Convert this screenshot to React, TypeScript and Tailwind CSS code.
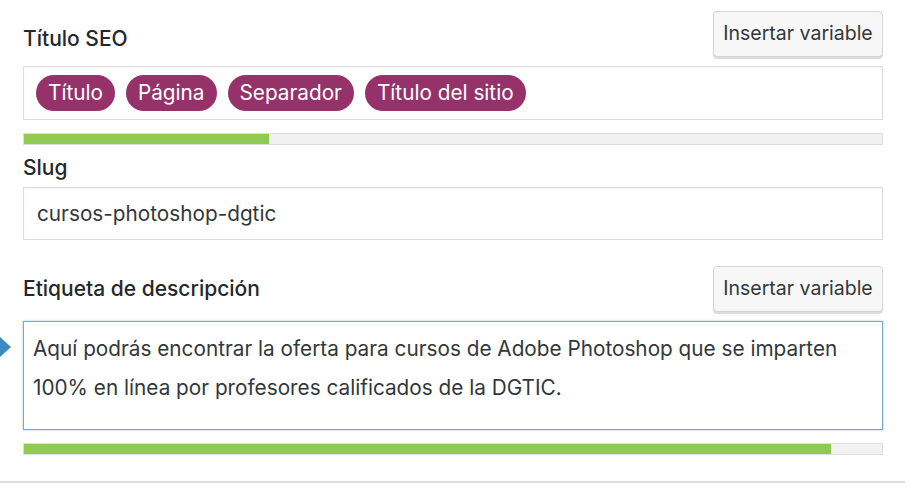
const font = { fontFamily: 'Inter, "Noto Sans", sans-serif' };

function InsertButton() {
  return (
    <button
      type="button"
      className="h-[46px] w-[170px] rounded-[4px] border border-[#d4d4d4] bg-[#f7f7f7] text-[19.5px] text-[#32373c] shadow-[0_2px_0_#dcdcdc]"
    >
      Insertar variable
    </button>
  );
}

function Pill({ label }: { label: string }) {
  return (
    <span className="flex h-[36px] items-center rounded-full bg-[#953269] px-[12px] text-[20.75px] text-white">
      {label}
    </span>
  );
}

function Progress({ pct }: { pct: number }) {
  return (
    <div className="h-[12px] w-full border border-[#dedede] bg-[#f1f1f1]">
      <div className="h-full bg-[#8fcb53]" style={{ width: `${pct}%` }} />
    </div>
  );
}

export default function App() {
  return (
    <div className="min-h-[491px] w-[913px] bg-white text-[#32373c]" style={font}>
      <div className="pl-[23px] pr-[30px] pt-[11px]">
        {/* Título SEO */}
        <div className="flex items-start justify-between">
          <label className="mt-[16px] text-[21px] font-medium leading-[24px] text-[#23282d]">Título SEO</label>
          <InsertButton />
        </div>
        <div className="mt-[9px] flex h-[54px] items-center gap-[11px] border border-[#dddddd] pl-[12px] shadow-[inset_0_1px_2px_rgba(0,0,0,0.04)]">
          <Pill label="Título" />
          <Pill label="Página" />
          <Pill label="Separador" />
          <Pill label="Título del sitio" />
        </div>
        <div className="mt-[13px]">
          <Progress pct={28.6} />
        </div>

        {/* Slug */}
        <label className="mt-[11px] block text-[21px] font-medium leading-[24px] text-[#23282d]">Slug</label>
        <div className="mt-[7px] flex h-[53px] items-center border border-[#dddddd] pl-[13px] text-[20.75px] shadow-[inset_0_1px_2px_rgba(0,0,0,0.04)]">
          cursos-photoshop-dgtic
        </div>

        {/* Etiqueta de descripción */}
        <div className="mt-[26px] flex items-start justify-between">
          <label className="mt-[11px] text-[21px] font-medium leading-[24px] text-[#23282d]">
            Etiqueta de descripción
          </label>
          <InsertButton />
        </div>
        <div className="relative mt-[9px]">
          <span className="absolute left-[-23px] top-[16px] h-0 w-0 border-y-[10px] border-l-[11px] border-y-transparent border-l-[#3a8ac3]" />
          <div className="h-[109px] border border-[#7ea4da] px-[9px] pt-[7px] text-[20.75px] leading-[39px] shadow-[0_0_2px_rgba(91,157,217,0.6)]">
            Aquí podrás encontrar la oferta para cursos de Adobe Photoshop que se imparten 100% en línea por profesores
            calificados de la DGTIC.
          </div>
        </div>
        <div className="mt-[13px]">
          <Progress pct={94} />
        </div>
      </div>
      <div className="mt-[26px] mr-[8px] h-[2px] bg-[#dddddd]" />
    </div>
  );
}
